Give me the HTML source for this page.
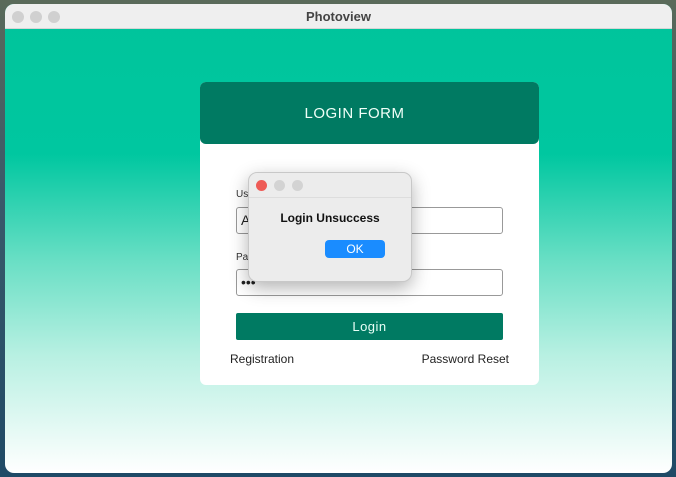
<!DOCTYPE html>
<html><head><style>
*{margin:0;padding:0;box-sizing:border-box}
body{width:676px;height:477px;overflow:hidden;background:linear-gradient(180deg,#5a6a5a 0%,#3a5a6a 40%,#1f4a66 100%);font-family:"Liberation Sans",sans-serif;position:relative}
.win{position:absolute;left:5px;top:4px;width:667px;height:469px;border-radius:9px;overflow:hidden;background:linear-gradient(180deg,#00c49b 0%,#00c7a0 32%,#6adfc5 55%,#b8f0e2 75%,#ffffff 100%)}
.tb{height:25px;background:#efefef;border-bottom:1px solid #d6d6d6;text-align:center;font-size:13px;font-weight:bold;color:#444;line-height:25px}
.dot{position:absolute;top:7px;width:12px;height:12px;border-radius:50%;background:#d0d0d0}
.card{position:absolute;left:195px;top:78px;width:339px;height:303px;background:#fff;border-radius:6px}
.hd{height:62px;background:#007a62;border-radius:6px;color:#f0fff8;text-align:center;line-height:64px;font-size:15px;letter-spacing:.5px;padding-right:30px}
.lbl{position:absolute;font-size:10px;color:#333}
.inp{position:absolute;left:36px;width:267px;height:27px;border:1px solid #999;border-radius:3px;font-size:14px;line-height:25px;padding-left:4px;color:#222}
.btn{position:absolute;left:36px;top:231px;width:267px;height:27px;background:#007a62;color:#e8fff7;text-align:center;line-height:27px;font-size:13px;letter-spacing:.5px;border-radius:2px}
.lk{position:absolute;top:270px;font-size:12px;color:#222}
.dlg{position:absolute;left:248px;top:172px;width:164px;height:110px;background:#ececec;border-radius:9px;border:1px solid #c8c8c8;box-shadow:0 6px 18px rgba(0,0,0,.3)}
.dt{height:25px;border-bottom:1px solid #ddd;position:relative}
.dd{position:absolute;top:7px;width:11px;height:11px;border-radius:50%;background:#d3d3d3}
.msg{text-align:center;font-weight:bold;font-size:12px;margin-top:13px;color:#111}
.ok{position:absolute;left:76px;top:67px;width:60px;height:18px;border-radius:4px;background:#1a8cff;color:#fff;font-size:12px;text-align:center;line-height:18px}
</style></head><body>
<div class="win">
<div class="tb">Photoview</div>
<div class="dot" style="left:7px"></div><div class="dot" style="left:25px"></div><div class="dot" style="left:43px"></div>
<div class="card">
<div class="hd">LOGIN FORM</div>
<div class="lbl" style="left:36px;top:107px">Username</div>
<div class="inp" style="top:125px">A</div>
<div class="lbl" style="left:36px;top:170px">Password</div>
<div class="inp" style="top:187px">•••</div>
<div class="btn">Login</div>
<div class="lk" style="left:30px">Registration</div>
<div class="lk" style="right:30px">Password Reset</div>
</div>
</div>
<div class="dlg">
<div class="dt"><div class="dd" style="left:7px;background:#ee5b56"></div><div class="dd" style="left:25px"></div><div class="dd" style="left:43px"></div></div>
<div class="msg">Login Unsuccess</div>
<div class="ok">OK</div>
</div>
</body></html>
